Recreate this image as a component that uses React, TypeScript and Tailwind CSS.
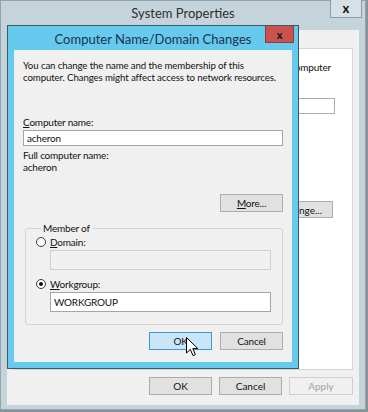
import React from "react";

const font = { fontFamily: "Lato, 'Liberation Sans', sans-serif" };

function Btn({
  children,
  className = "",
}: {
  children: React.ReactNode;
  className?: string;
}) {
  return (
    <div
      className={
        "w-[63px] h-[18px] flex items-center justify-center border text-[10px] leading-none " +
        className
      }
    >
      {children}
    </div>
  );
}

function Radio({ checked }: { checked?: boolean }) {
  return (
    <span className="w-[10px] h-[10px] rounded-full border border-[#3c3c3c] bg-white flex items-center justify-center shrink-0">
      {checked && <span className="w-[4px] h-[4px] rounded-full bg-[#111]" />}
    </span>
  );
}

export default function App() {
  return (
    <div
      className="w-[368px] h-[412px] relative overflow-hidden bg-[#8c9195] text-[#111]"
      style={font}
    >
      {/* Outer window: System Properties */}
      <div className="w-[366px] h-[410px] border border-[#91a4ae] bg-[#c5d4db] flex flex-col">
        <div className="h-[29px] grid grid-cols-[1fr_auto_1fr] items-start">
          <div />
          <div className="text-[13px] text-[#2e2e2e] leading-none pt-[6px]">
            System Properties
          </div>
          <div className="flex justify-end pr-[3px]">
            <div className="w-[32px] h-[18px] -mt-px border border-t-0 border-[#8a9ca6] bg-[#d6e1e6] flex items-center justify-center text-[13px] font-bold leading-none">
              x
            </div>
          </div>
        </div>
        <div className="mx-[6px] h-[375px] bg-[#f0f0f0] flex flex-col px-[6px] pt-[18px]">
          <div className="h-[322px] bg-white border border-[#d6d6d6] flex flex-col">
            <div className="mt-[12px] mr-[21px] self-end w-[33px] h-[12px] overflow-hidden flex justify-end">
              <span className="text-[10px] leading-[12px] whitespace-nowrap tracking-[-0.2px]">
                computer
              </span>
            </div>
            <div className="mt-[25px] self-end mr-[17px] w-[240px] h-[16px] border border-[#acacac] bg-white" />
            <div className="mt-[87px] self-end mr-[19px] w-[35px] h-[17px] border border-l-0 border-[#adadad] bg-[#e1e1e1] overflow-hidden flex items-center justify-end pr-[10px] text-[10px] leading-none">
              <span className="whitespace-nowrap">nge...</span>
            </div>
          </div>
          <div className="mt-[7px] flex justify-end gap-[7px]">
            <Btn className="border-[#adadad] bg-[#e1e1e1] h-[18px]">OK</Btn>
            <Btn className="border-[#adadad] bg-[#e1e1e1] h-[18px]">Cancel</Btn>
            <Btn className="border-[#cfcfcf] bg-[#f0f0f0] text-[#a3a3a3] w-[64px] h-[18px]">
              Apply
            </Btn>
          </div>
        </div>
      </div>

      {/* Inner dialog: Computer Name/Domain Changes */}
      <div className="absolute left-[7px] top-[25px] w-[292px] h-[344px] border border-[#3b5a68] bg-[#66caee] flex flex-col">
        <div className="h-[24px] grid grid-cols-[1fr_auto_1fr] items-start">
          <div />
          <div className="text-[13px] text-[#1b3249] leading-none pt-[7px] whitespace-nowrap">
            Computer Name/Domain Changes
          </div>
          <div className="flex justify-end pr-[4px]">
            <div className="w-[29px] h-[17px] border border-t-0 border-[#8e3d3b] bg-[#c9524f] flex items-center justify-center text-[11px] font-bold leading-none text-[#111]">
              x
            </div>
          </div>
        </div>
        <div className="mx-[6px] h-[312px] bg-[#f0f0f0] flex flex-col px-[9px] text-[10px] leading-[12px] tracking-[-0.2px]">
          <div className="pt-[10px] whitespace-nowrap flex flex-col text-[9.7px] leading-[11px] gap-[1px] tracking-[-0.12px]">
            <span>You can change the name and the membership of this</span>
            <span>computer. Changes might affect access to network resources.</span>
          </div>
          <div className="mt-[33px]">
            <span className="underline">C</span>omputer name:
          </div>
          <div className="mt-[2px] h-[16px] border border-[#a5a5a5] bg-white flex items-center pl-[3px]">
            acheron
          </div>
          <div className="mt-[3px]">Full computer name:</div>
          <div>acheron</div>
          <div className="mt-[21px] flex justify-end">
            <Btn className="border-[#adadad] bg-[#e1e1e1]">
              <span>
                <span className="underline">M</span>ore...
              </span>
            </Btn>
          </div>
          <fieldset className="mt-[10px] ml-[2px] border border-[#d5d5d5] rounded-[3px] pb-[12px] pl-[10px] pr-[11px]">
            <legend className="ml-[5px] px-[2px] leading-[12px]">Member of</legend>
            <div className="mt-[2px] flex items-center gap-[4px] h-[12px]">
              <Radio />
              <span>
                <span className="underline">D</span>omain:
              </span>
            </div>
            <div className="mt-[2px] ml-[14px] h-[20px] border border-[#cfcfcf] bg-[#f0f0f0]" />
            <div className="mt-[8px] flex items-center gap-[4px] h-[12px]">
              <Radio checked />
              <span>
                <span className="underline">W</span>orkgroup:
              </span>
            </div>
            <div className="mt-[2px] ml-[14px] h-[20px] border border-[#a5a5a5] bg-white flex items-center pl-[3px]">
              WORKGROUP
            </div>
          </fieldset>
          <div className="mt-[7px] flex justify-end gap-[8px]">
            <Btn className="border-[#3f97d8] bg-[#c8e6f8]">OK</Btn>
            <Btn className="border-[#adadad] bg-[#e1e1e1]">Cancel</Btn>
          </div>
        </div>
      </div>

      {/* Mouse cursor */}
      <svg
        className="absolute left-[186px] top-[337px]"
        width="13"
        height="20"
        viewBox="0 0 13 20"
      >
        <path
          d="M0.5 0.5 L0.5 16 L4.3 12.4 L7 18.6 L9.4 17.6 L6.8 11.6 L11.8 11.6 Z"
          fill="#fff"
          stroke="#000"
          strokeWidth="1"
          strokeLinejoin="round"
        />
      </svg>
    </div>
  );
}
